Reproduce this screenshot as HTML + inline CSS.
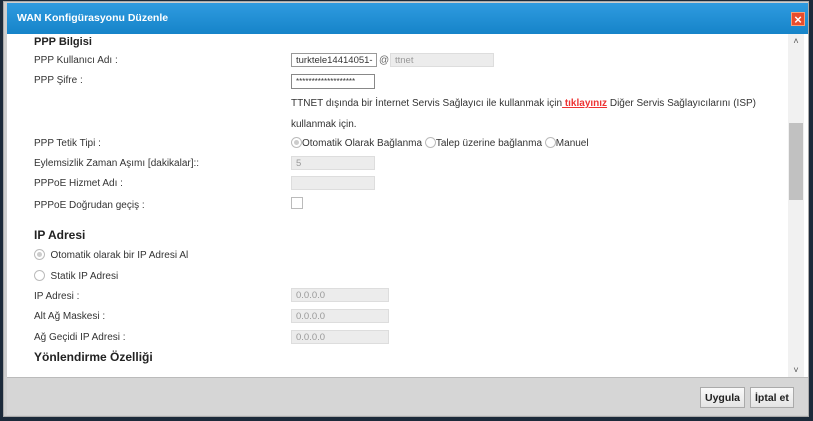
<!DOCTYPE html>
<html><head><meta charset="utf-8"><style>
*{margin:0;padding:0;box-sizing:border-box}
body{width:813px;height:421px;background:#1c2a3a;position:relative;overflow:hidden;font-family:"Liberation Sans",sans-serif;font-size:10px;color:#333}
.dlg{position:absolute;left:3px;top:1px;width:806px;height:416px;background:#cfcfcf;border:1px solid #aaa}
.title{position:absolute;left:4px;top:1px;width:801px;height:32px;background:linear-gradient(#2f9be0,#1583c8);color:#fff;font-weight:bold;font-size:10.5px;padding:9px 10px}
.close{position:absolute;right:3px;top:9px;width:14px;height:14px;background:#e84c2c;color:#fff;font-size:13px;line-height:13px;text-align:center;border:1px solid #f7a07a}
.body{position:absolute;left:4px;top:34px;width:801px;height:343px;background:#fff}
.sb{position:absolute;right:4px;top:0;width:16px;height:343px;background:#f1f1f1}
.thumb{position:absolute;left:1px;top:89px;width:14px;height:77px;background:#c1c1c1}
.foot{position:absolute;left:4px;top:377px;width:801px;height:38px;background:#d6d6d6;border-top:1px solid #bbb}
.t{position:absolute;white-space:nowrap}
.h{font-weight:bold;font-size:11px;color:#222}
.h2{font-weight:bold;font-size:12px;color:#222}
.in{position:absolute;height:14px;background:#ececec;border:1px solid #ddd;color:#999;font-size:9.5px;padding:1px 4px}
.rad{display:inline-block;width:11px;height:11px;border:1px solid #bbb;border-radius:50%;vertical-align:-2px;background:#fff;position:relative}
.rad.on::after{content:"";position:absolute;left:2px;top:2px;width:5px;height:5px;border-radius:50%;background:#ccc}
.btn{position:absolute;top:387px;height:21px;background:linear-gradient(#fafafa,#e4e4e4);border:1px solid #aaa;font-weight:bold;font-size:10.5px;padding:4px 4px;color:#222}
</style></head><body>
<div class="dlg"></div>
<div class="title" style="left:7px;top:3px">WAN Konfigürasyonu Düzenle<div class="close">×</div></div>
<div class="body" style="left:7px"></div>
<div class="sb" style="left:788px;top:34px"><div style="text-align:center;font-size:9px;color:#555;margin-top:2px">˄</div><div class="thumb"></div><div style="position:absolute;bottom:2px;width:16px;text-align:center;font-size:9px;color:#555">˅</div></div>
<div class="foot" style="left:7px"></div>

<div class="t h" style="left:34px;top:36px">PPP Bilgisi</div>
<div class="t" style="left:34px;top:55px">PPP Kullanıcı Adı :</div>
<div class="in" style="left:291px;top:53px;width:86px;background:#fff;border-color:#999;color:#333">turktele14414051-</div>
<div class="t" style="left:379px;top:55px;color:#666">@</div>
<div class="in" style="left:390px;top:53px;width:104px">ttnet</div>
<div class="t" style="left:34px;top:75px">PPP Şifre :</div>
<div class="in" style="left:291px;top:74px;width:84px;height:15px;background:#fff;border-color:#888;color:#333;font-size:8px;padding-top:2px">*******************</div>
<div class="t" style="left:291px;top:98px">TTNET dışında bir İnternet Servis Sağlayıcı ile kullanmak için<b style="color:#e33;text-decoration:underline"> tıklayınız</b> Diğer Servis Sağlayıcılarını (ISP)</div>
<div class="t" style="left:291px;top:119px">kullanmak için.</div>
<div class="t" style="left:34px;top:138px">PPP Tetik Tipi :</div>
<div class="t" style="left:291px;top:137px"><span class="rad on"></span>Otomatik Olarak Bağlanma <span class="rad"></span>Talep üzerine bağlanma <span class="rad"></span>Manuel</div>
<div class="t" style="left:34px;top:158px">Eylemsizlik Zaman Aşımı [dakikalar]::</div>
<div class="in" style="left:291px;top:156px;width:84px">5</div>
<div class="t" style="left:34px;top:178px">PPPoE Hizmet Adı :</div>
<div class="in" style="left:291px;top:176px;width:84px"></div>
<div class="t" style="left:34px;top:200px">PPPoE Doğrudan geçiş :</div>
<div style="position:absolute;left:291px;top:197px;width:12px;height:12px;border:1px solid #bbb;background:#fff"></div>
<div class="t h2" style="left:34px;top:228px">IP Adresi</div>
<div class="t" style="left:34px;top:249px"><span class="rad on"></span>&nbsp; Otomatik olarak bir IP Adresi Al</div>
<div class="t" style="left:34px;top:270px"><span class="rad"></span>&nbsp; Statik IP Adresi</div>
<div class="t" style="left:34px;top:291px">IP Adresi :</div>
<div class="in" style="left:291px;top:288px;width:98px">0.0.0.0</div>
<div class="t" style="left:34px;top:311px">Alt Ağ Maskesi :</div>
<div class="in" style="left:291px;top:309px;width:98px">0.0.0.0</div>
<div class="t" style="left:34px;top:332px">Ağ Geçidi IP Adresi :</div>
<div class="in" style="left:291px;top:330px;width:98px">0.0.0.0</div>
<div class="t h2" style="left:34px;top:350px">Yönlendirme Özelliği</div>

<div class="btn" style="left:700px">Uygula</div>
<div class="btn" style="left:750px">İptal et</div>
</body></html>
